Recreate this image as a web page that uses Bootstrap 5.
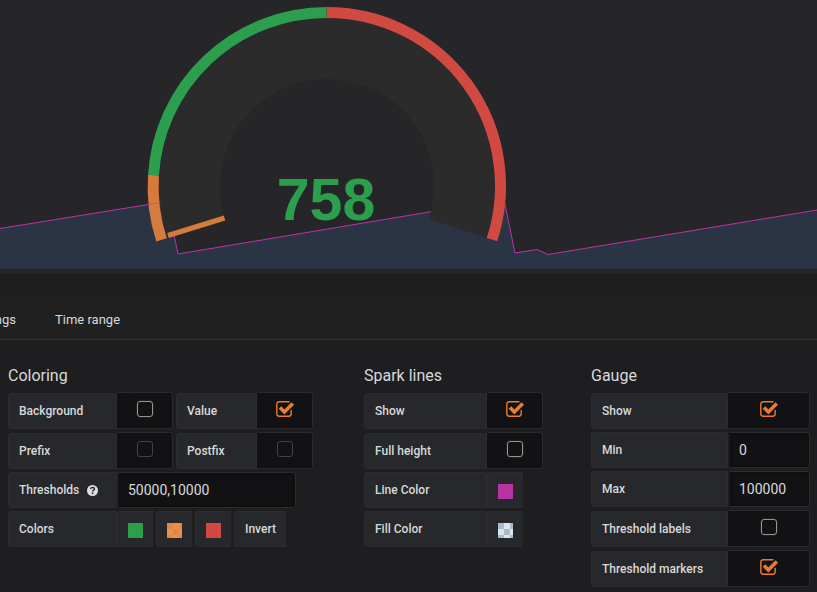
<!DOCTYPE html>
<html lang="en">
<head>
<meta charset="utf-8">
<meta name="viewport" content="width=device-width, initial-scale=1">
<title>Singlestat panel</title>
<link href="https://cdn.jsdelivr.net/npm/bootstrap@5.3.0/dist/css/bootstrap.min.css" rel="stylesheet">
<style>
  body { background: #1e1e20; color: #d8d9da; font-family: Roboto, "Liberation Sans", sans-serif; font-size: 14px; line-height: 20px; }
  .stat-panel { background: #262628; }
  .stat-value { font: bold 59px "Liberation Sans", Arial, sans-serif; fill: #2b9f4e; }
  .tab-strip { height: 66px; padding-top: 27px; gap: 39px; border-bottom: 1px solid #353536; background: linear-gradient(#1e1e1f, #212122); }
  .tab-strip .nav-link { color: #d8d9da; font-size: 13px; line-height: 38px; padding: 0; white-space: nowrap; height: 38px; }
  .tab-cut { width: 16px; overflow: hidden; }
  .editor { padding: 26px 7px 0 8px; column-gap: 48px; }
  .editor h2 { font-size: 16px; line-height: 20px; font-weight: 400; margin-bottom: 6px; }
  .group-wide { width: 308px; }
  .form-line { margin-bottom: 3px; }
  .form-set { gap: 3px; }
  .cell-label, .cell-btn { height: 36px; background: #27282b; border: 1px solid #2c2c2f; color: #d8d9da; font-size: 12px; line-height: 34px; font-weight: 500; padding: 0 10px; }
  .cell-label { border-radius: 3px 0 0 3px; white-space: nowrap; }
  .cell-btn { border-right: 0; border-radius: 3px 0 0 3px; }
  .w-a { width: 109px; } .w-b { width: 81px; } .w-c { width: 123px; } .w-d { width: 137px; }
  .cell-check { width: 56px; height: 37px; background: #121214; border: 1px solid #2a2a2c; border-left: 0; border-radius: 0 3px 3px 0; padding-bottom: 3px; }
  .cell-wide { width: 82px; }
  .tick { appearance: none; margin: 0; width: 16px; height: 16px; border: 1px solid #969696; border-radius: 3px; background: transparent; box-shadow: 0 0 3px #333; }
  .tick.faint { border-color: #434345; box-shadow: none; }
  .tick:checked { width: 18px; border: 0; border-radius: 0; box-shadow: none; background: url("data:image/svg+xml,%3Csvg xmlns='http://www.w3.org/2000/svg' viewBox='0 0 18 16'%3E%3Cpath d='M13 .8H3.200Q.8.800.8 3.200V12.800Q.8 15.200 3.200 15.200H12.800Q15.200 15.200 15.200 12.800V9.500' fill='none' stroke='%23eb7b2d' stroke-width='1.400' stroke-linecap='round'/%3E%3Cpath d='M4 6.500L8.400 10.900L16.800 2.500' fill='none' stroke='%23eb7b2d' stroke-width='3.600'/%3E%3C/svg%3E") no-repeat; }
  .cell-input { height: 36px; background: #121214; border: 1px solid #2c2c2f; border-left: 2px solid #1d1d1f; border-radius: 0 3px 3px 0; color: #d8d9da; font-size: 14px; padding: 0 9px; box-shadow: inset 0 0 3px #0a0a0b; }
  .w-thresh { width: 179px; }
  .swatch { width: 15px; height: 15px; margin-top: 2px; }
  .green { background: #2b9f4e; } .red { background: #d14a42; } .pink { background: #b934a3; }
  .orange { background: repeating-conic-gradient(#ec914d 0 25%, #e38743 0 50%) 0 0 / 12px 12px; }
  .pale { background: repeating-conic-gradient(#d7e6f3 0 25%, #acb9c6 0 50%) 0 0 / 12px 12px; }
</style>
<script src="https://cdn.jsdelivr.net/npm/bootstrap@5.3.0/dist/js/bootstrap.bundle.min.js"></script>
</head>
<body class="overflow-x-hidden">
<section class="stat-panel">
  <svg class="d-block w-100" viewBox="0 0 817 274" role="img" aria-label="Gauge, 758">
    <path d="M0 228.500L167 201.500L178 254L504 199.500L515 253L537 249.500L548 254.500L817 210V269H0Z" fill="#2b3444"/>
    <path d="M0 228.500L167 201.500L178 254L504 199.500L515 253L537 249.500L548 254.500L817 210" fill="none" stroke="#b934a3"/>
    <path d="M196.230 228.490A137.500 137.500 0 1 1 457.770 228.490" fill="none" stroke="#2b2b2b" stroke-width="61"/>
    <g fill="none" stroke-width="11">
      <path d="M326.500 12.500A173.500 173.500 0 0 1 492.010 239.610" stroke="#d14a42"/>
      <path d="M153.500 175.110A173.500 173.500 0 0 1 326.500 12.500" stroke="#2b9f4e"/>
      <path d="M161.500 239.900A173.500 173.500 0 0 1 153.500 175.110" stroke="#d67b3b"/>
    </g>
    <path d="M168 235.500L224.500 218" stroke="#d67b3b" stroke-width="5"/>
    <path d="M148 204.600L161 202.500" stroke="#b934a3" opacity=".45"/>
    <text class="stat-value" x="326" y="220" text-anchor="middle">758</text>
  </svg>
</section>

<nav class="nav tab-strip flex-nowrap" aria-label="Panel editor">
  <a class="nav-link tab-cut d-flex justify-content-end" href="#">Value Mappings</a>
  <a class="nav-link" href="#">Time range</a>
</nav>

<main class="editor d-flex flex-wrap">
  <section class="group-wide">
    <h2>Coloring</h2>
    <div class="form-line form-set d-flex">
      <div class="d-flex align-items-end"><label class="cell-label w-a" for="bg">Background</label><span class="cell-check d-flex align-items-center justify-content-center"><input class="tick" type="checkbox" id="bg"></span></div>
      <div class="d-flex align-items-end"><label class="cell-label w-b" for="val">Value</label><span class="cell-check d-flex align-items-center justify-content-center"><input class="tick" type="checkbox" id="val" checked></span></div>
    </div>
    <div class="form-line form-set d-flex">
      <div class="d-flex align-items-end"><label class="cell-label w-a" for="pre">Prefix</label><span class="cell-check d-flex align-items-center justify-content-center"><input class="tick faint" type="checkbox" id="pre"></span></div>
      <div class="d-flex align-items-end"><label class="cell-label w-b" for="post">Postfix</label><span class="cell-check d-flex align-items-center justify-content-center"><input class="tick faint" type="checkbox" id="post"></span></div>
    </div>
    <div class="form-line d-flex">
      <label class="cell-label w-a d-flex align-items-center gap-2" for="thr">Thresholds
        <svg width="11" height="11" viewBox="0 0 12 12" aria-hidden="true"><circle cx="6" cy="6" r="6" fill="#e0e0e1"/><path d="M3.800 4.500Q4.200 2.600 6 2.600Q8.200 2.700 8.100 4.400Q8 5.400 6.900 5.900Q6.100 6.300 6.100 7.200" fill="none" stroke="#27282b" stroke-width="1.600"/><path d="M5.200 8.200H7V9.900H5.200Z" fill="#27282b"/></svg>
      </label>
      <input class="cell-input w-thresh" type="text" id="thr" value="50000,10000">
    </div>
    <div class="form-line form-set d-flex">
      <div class="d-flex"><span class="cell-label w-a">Colors</span><button class="cell-btn d-flex align-items-center" type="button" aria-label="First color"><span class="swatch green"></span></button></div>
      <button class="cell-btn d-flex align-items-center" type="button" aria-label="Second color"><span class="swatch orange"></span></button>
      <button class="cell-btn d-flex align-items-center" type="button" aria-label="Third color"><span class="swatch red"></span></button>
      <button class="cell-btn" type="button">Invert</button>
    </div>
  </section>

  <section>
    <h2>Spark lines</h2>
    <div class="form-line d-flex align-items-end"><label class="cell-label w-c" for="sshow">Show</label><span class="cell-check d-flex align-items-center justify-content-center"><input class="tick" type="checkbox" id="sshow" checked></span></div>
    <div class="form-line d-flex align-items-end"><label class="cell-label w-c" for="full">Full height</label><span class="cell-check d-flex align-items-center justify-content-center"><input class="tick" type="checkbox" id="full"></span></div>
    <div class="form-line d-flex"><span class="cell-label w-c">Line Color</span><button class="cell-btn d-flex align-items-center" type="button" aria-label="Line color"><span class="swatch pink"></span></button></div>
    <div class="form-line d-flex"><span class="cell-label w-c">Fill Color</span><button class="cell-btn d-flex align-items-center" type="button" aria-label="Fill color"><span class="swatch pale"></span></button></div>
  </section>

  <section>
    <h2>Gauge</h2>
    <div class="form-line d-flex align-items-end"><label class="cell-label w-d" for="gshow">Show</label><span class="cell-check cell-wide d-flex align-items-center justify-content-center"><input class="tick" type="checkbox" id="gshow" checked></span></div>
    <div class="form-line d-flex"><label class="cell-label w-d" for="min">Min</label><input class="cell-input cell-wide" type="text" id="min" value="0"></div>
    <div class="form-line d-flex"><label class="cell-label w-d" for="max">Max</label><input class="cell-input cell-wide" type="text" id="max" value="100000"></div>
    <div class="form-line d-flex align-items-end"><label class="cell-label w-d" for="tl">Threshold labels</label><span class="cell-check cell-wide d-flex align-items-center justify-content-center"><input class="tick" type="checkbox" id="tl"></span></div>
    <div class="form-line d-flex align-items-end"><label class="cell-label w-d" for="tm">Threshold markers</label><span class="cell-check cell-wide d-flex align-items-center justify-content-center"><input class="tick" type="checkbox" id="tm" checked></span></div>
  </section>
</main>
</body>
</html>
